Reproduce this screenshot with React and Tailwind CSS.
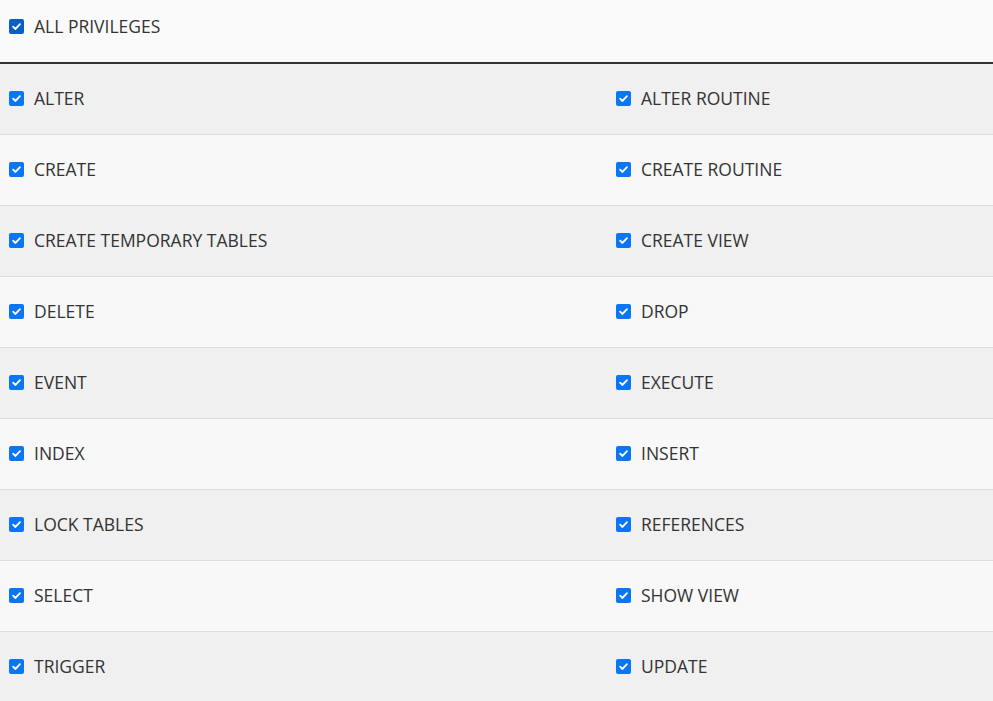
import React from 'react';

const rows = [
  ['ALTER', 'ALTER ROUTINE'],
  ['CREATE', 'CREATE ROUTINE'],
  ['CREATE TEMPORARY TABLES', 'CREATE VIEW'],
  ['DELETE', 'DROP'],
  ['EVENT', 'EXECUTE'],
  ['INDEX', 'INSERT'],
  ['LOCK TABLES', 'REFERENCES'],
  ['SELECT', 'SHOW VIEW'],
  ['TRIGGER', 'UPDATE'],
];

const Check = ({ dark }) => (
  <span
    className={`flex h-[15px] w-[15px] shrink-0 items-center justify-center rounded-[2px] ${
      dark ? 'bg-[#0b5ec6]' : 'bg-[#0a75f5]'
    }`}
  >
    <svg viewBox="0 0 12 12" className="h-[11px] w-[11px]">
      <path d="M2.3 6.2 L4.9 8.7 L9.8 3.4" fill="none" stroke="white" strokeWidth="2" strokeLinecap="round" strokeLinejoin="round" />
    </svg>
  </span>
);

const Item = ({ label, dark }) => (
  <label className="flex items-center gap-[10px] pl-[9px]">
    <Check dark={dark} />
    <span className="leading-[24px]">{label}</span>
  </label>
);

export default function App() {
  return (
    <div className="h-[701px] w-[993px] overflow-hidden bg-[#f9f9f9] text-[17.5px] text-[#333] [font-family:'Open_Sans',sans-serif]">
      <div className="h-[64px] border-b-2 border-[#333] bg-[#fafafa] pt-[14px]">
        <Item label="ALL PRIVILEGES" dark />
      </div>
      {rows.map(([a, b], i) => (
        <div
          key={a}
          className={`grid h-[71px] grid-cols-[607px_1fr] items-center border-b border-[#dddddd] pb-[2px] ${
            i % 2 === 0 ? 'bg-[#f0f0f0]' : 'bg-[#f8f8f8]'
          }`}
        >
          <Item label={a} />
          <Item label={b} />
        </div>
      ))}
    </div>
  );
}
